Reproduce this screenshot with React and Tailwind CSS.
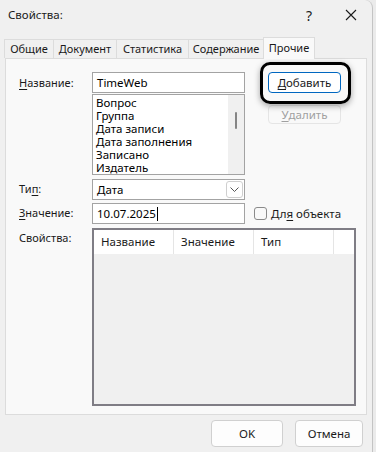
import React from 'react';

const font = { fontFamily: '"Noto Sans", "Open Sans", sans-serif' };

const Tab = ({ label, width, active }) => (
    <div
        className={`flex items-center justify-center text-[11px] text-[#1a1a1a] border-[#dcdcdc] ${
            active
                ? 'h-[22px] bg-[#f9f9f9] border-t border-l border-r -mb-px relative z-10'
                : 'h-[19px] bg-[#f0f0f0] border-t border-l'
        }`}
        style={{ width }}
    >
        {label}
    </div>
);

const Label = ({ children }) => (
    <div className="w-[73px] shrink-0 text-[11px] text-[#1a1a1a]">{children}</div>
);

const App = () => {
    const items = ['Вопрос', 'Группа', 'Дата записи', 'Дата заполнения', 'Записано', 'Издатель'];

    return (
        <div className="w-[376px] h-[452px] bg-[#ebebeb] overflow-hidden" style={font}>
            <div className="w-[373px] h-[452px] bg-[#f0f0f0] border-r border-[#c4c4c4] rounded-tr-[8px] flex flex-col">
                {/* title bar */}
                <div className="h-[30px] flex items-center pl-[8px] shrink-0">
                    <span className="text-[11.5px] text-[#1a1a1a]">Свойства:</span>
                    <span className="ml-auto mr-[33px] text-[14px] text-[#1a1a1a]">?</span>
                    <svg width="12" height="12" viewBox="0 0 12 12" className="mr-[15px]">
                        <path d="M1 1 L11 11 M11 1 L1 11" stroke="#1a1a1a" strokeWidth="1.1" />
                    </svg>
                </div>

                {/* tabs */}
                <div className="h-[28px] flex items-end pl-[4px] pr-[5px] shrink-0">
                    <Tab label="Общие" width={49} />
                    <Tab label="Документ" width={63} />
                    <Tab label="Статистика" width={72} />
                    <Tab label="Содержание" width={75} />
                    <Tab label="Прочие" width={52} active />
                </div>

                {/* panel */}
                <div className="ml-[5px] mr-[5px] h-[357px] bg-[#f9f9f9] border border-[#dcdcdc] pl-[13px] pt-[13px] flex flex-col shrink-0">
                    {/* Название + list + buttons */}
                    <div className="flex">
                        <Label>
                            <div className="pt-[3px]">
                                <span className="underline underline-offset-2">Н</span>азвание:
                            </div>
                        </Label>
                        <div className="flex flex-col w-[153px]">
                            <div className="h-[21px] bg-white border border-[#a3a3a3] flex items-center pl-[4px] text-[11.5px] text-black">
                                TimeWeb
                            </div>
                            <div className="h-[81px] mt-px bg-white border border-[#a3a3a3] flex">
                                <div className="flex-1 pl-[3px] pt-[1px] text-[11.5px] leading-[13px] text-black">
                                    {items.map((it) => (
                                        <div key={it}>{it}</div>
                                    ))}
                                </div>
                                <div className="w-[16px] bg-[#f0f0f0] flex justify-center pt-[17px]">
                                    <div className="w-[2px] h-[17px] bg-[#858585] rounded-full" />
                                </div>
                            </div>
                        </div>
                        <div className="ml-[23px] pt-0 flex flex-col gap-[12px]">
                            <div className="relative">
                                <div className="absolute -left-[8px] -top-[10px] w-[91px] h-[42px] border-[3px] border-black rounded-[10px] shadow-[0_2px_6px_rgba(0,0,0,0.35)]" />
                                <button className="relative w-[73px] h-[21px] bg-white border border-[#0067c0] rounded-[4px] text-[11.5px] text-[#1a1a1a] flex items-center justify-center">
                                    <span className="underline underline-offset-2">Д</span>обавить
                                </button>
                            </div>
                            <button className="w-[73px] h-[19px] bg-[#f9f9f9] border border-[#e5e5e5] rounded-[4px] text-[11.5px] text-[#a0a0a0] flex items-center justify-center">
                                <span className="underline underline-offset-2">У</span>далить
                            </button>
                        </div>
                    </div>

                    {/* Тип */}
                    <div className="flex items-center mt-[4px]">
                        <Label>
                            Ти<span className="underline underline-offset-2">п</span>:
                        </Label>
                        <div className="w-[153px] h-[21px] bg-white border border-[#a3a3a3] flex items-center pl-[4px] pr-[1px] text-[11.5px] text-black">
                            <span className="flex-1">Дата</span>
                            <div className="w-[17px] h-[17px] border border-[#cfcfcf] rounded-[3px] flex items-center justify-center">
                                <svg width="9" height="5" viewBox="0 0 9 5">
                                    <path d="M0.5 0.5 L4.5 4.5 L8.5 0.5" fill="none" stroke="#555" strokeWidth="1" />
                                </svg>
                            </div>
                        </div>
                    </div>

                    {/* Значение */}
                    <div className="flex items-center mt-[3px]">
                        <Label>
                            <span className="underline underline-offset-2">З</span>начение:
                        </Label>
                        <div className="w-[153px] h-[21px] bg-white border border-[#a3a3a3] flex items-center pl-[4px] text-[11.5px] text-black">
                            10.07.2025
                            <span className="inline-block w-px h-[14px] bg-black ml-px" />
                        </div>
                        <div className="ml-[9px] flex items-center gap-[4px] text-[11.5px] text-[#1a1a1a]">
                            <div className="w-[13px] h-[13px] border border-[#8a8a8a] rounded-[3px] bg-[#f9f9f9]" />
                            <span>
                                Дл<span className="underline underline-offset-2">я</span> объекта
                            </span>
                        </div>
                    </div>

                    {/* Свойства table */}
                    <div className="flex mt-[4px]">
                        <Label>
                            <div className="pt-[2px]">Свойства:</div>
                        </Label>
                        <div className="w-[264px] h-[178px] border-2 border-[#7f7d85] bg-[#f0f0f0] flex flex-col">
                            <div className="h-[24px] bg-white flex text-[11.5px] text-[#1a1a1a]">
                                <div className="w-[80px] border-r border-[#e5e5e5] flex items-center pl-[7px]">Название</div>
                                <div className="w-[80px] border-r border-[#e5e5e5] flex items-center pl-[7px]">Значение</div>
                                <div className="w-[80px] border-r border-[#e5e5e5] flex items-center pl-[7px]">Тип</div>
                                <div className="flex-1" />
                            </div>
                        </div>
                    </div>
                </div>

                {/* footer buttons */}
                <div className="flex justify-end gap-[12px] pr-[9px] mt-[5px]">
                    <button className="w-[72px] h-[27px] bg-[#fdfdfd] border border-[#d0d0d0] rounded-[4px] text-[11.5px] text-[#1a1a1a]">
                        OK
                    </button>
                    <button className="w-[68px] h-[27px] bg-[#fdfdfd] border border-[#d0d0d0] rounded-[4px] text-[11.5px] text-[#1a1a1a]">
                        Отмена
                    </button>
                </div>
            </div>
        </div>
    );
};

export default App;
